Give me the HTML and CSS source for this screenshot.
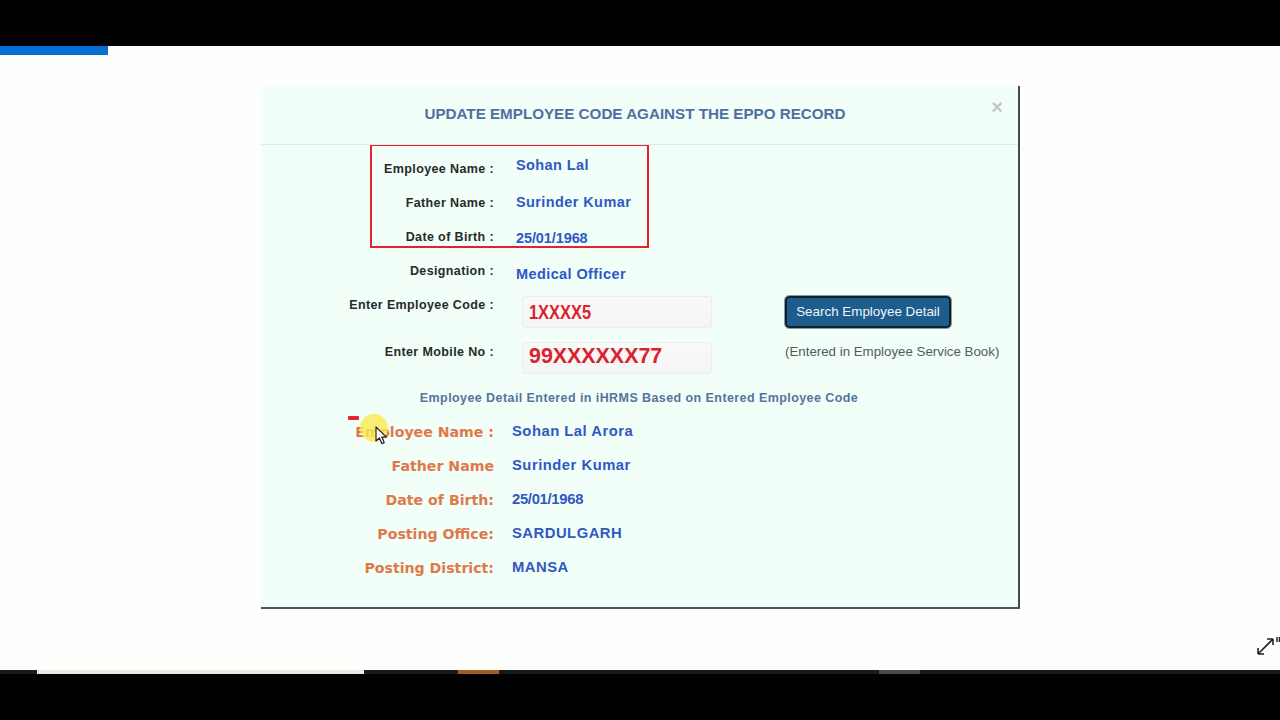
FILE: index.html
```html
<!DOCTYPE html>
<html lang="en">
<head>
<meta charset="utf-8">
<title>Update Employee Code</title>
<link rel="stylesheet" href="styles.css">
</head>
<body>
<div class="topbar"></div>
<main class="stage">
  <div class="loader"></div>
  <section class="modal">
    <header class="modal-head">
      <h1 class="title">UPDATE EMPLOYEE CODE AGAINST THE EPPO RECORD</h1>
      <span class="close">×</span>
    </header>
    <div class="redbox">
      <div class="row"><span class="label label-boxed">Employee Name :</span><span class="value value-up">Sohan Lal</span></div>
      <div class="row"><span class="label label-boxed">Father Name :</span><span class="value">Surinder Kumar</span></div>
      <div class="row"><span class="label label-boxed">Date of Birth :</span><span class="value value-down value-date">25/01/1968</span></div>
    </div>
    <div class="row row-designation"><span class="label label-high">Designation :</span><span class="value value-low">Medical Officer</span></div>
    <div class="form-row form-row-first">
      <span class="label form-label">Enter Employee Code :</span>
      <div class="field field-code"><span class="code-text">1XXXX5</span></div>
      <button class="search">Search Employee Detail</button>
    </div>
    <div class="form-row">
      <span class="label form-label form-label-mobile">Enter Mobile No :</span>
      <div class="field field-mobile">99XXXXXX77</div>
      <span class="note">(Entered in Employee Service Book)</span>
    </div>
    <h2 class="subhead">Employee Detail Entered in iHRMS Based on Entered Employee Code</h2>
    <div class="details">
      <div class="row"><span class="dlabel">Employee Name :</span><span class="dvalue">Sohan Lal Arora</span></div>
      <div class="row"><span class="dlabel">Father Name</span><span class="dvalue">Surinder Kumar</span></div>
      <div class="row"><span class="dlabel">Date of Birth:</span><span class="dvalue dvalue-date">25/01/1968</span></div>
      <div class="row"><span class="dlabel">Posting Office:</span><span class="dvalue">SARDULGARH</span></div>
      <div class="row"><span class="dlabel">Posting District:</span><span class="dvalue">MANSA</span></div>
    </div>
    <i class="dash"></i>
    <i class="halo"></i>
    <svg class="cursor" viewBox="0 0 13 19" width="13" height="19"><path d="M1 1v14l3.400-3 2.400 5.600 2.400-1-2.400-5.500h4.600z" fill="#fff" stroke="#222" stroke-width="1.200" stroke-linejoin="round"/></svg>
  </section>
  <svg class="expand" viewBox="0 0 24 20" width="24" height="20"><path d="M2 18 17 3M2 18v-6M2 18h6M17 3h-6M17 3v6" fill="none" stroke="#222" stroke-width="1.600"/><path d="M21 1v5M23.500 1v5" stroke="#222" stroke-width="1.500"/></svg>
</main>
<footer class="bottombar">
  <div class="track">
    <i class="seg seg-gap1"></i>
    <i class="seg seg-white"></i>
    <i class="seg seg-gap2"></i>
    <i class="seg seg-orange"></i>
    <i class="seg seg-gap3"></i>
    <i class="seg seg-gray"></i>
  </div>
</footer>
</body>
</html>
```
FILE: styles.css
```css
* { box-sizing: border-box; }
html, body { height: 100%; }
body {
  margin: 0;
  display: flex;
  flex-direction: column;
  height: 720px;
  overflow: hidden;
  background: #000;
  font-family: "Liberation Sans", Arial, sans-serif;
}
.topbar { height: 46px; background: #000; flex: none; }
.stage {
  position: relative;
  height: 624px;
  flex: none;
  background: #fdfffd;
}
.loader { width: 108px; height: 9px; background: #0370d2; }
.modal {
  position: relative;
  width: 759px;
  height: 523px;
  margin: 31px 0 0 261px;
  background: #f2fef8;
  border-right: 2px solid #4a4a4a;
  border-bottom: 2px solid #555;
}
.modal-head {
  position: relative;
  height: 59px;
  padding-right: 9px;
  display: flex;
  align-items: center;
  justify-content: center;
  border-bottom: 1px solid #e2ece7;
}
.title {
  margin: 0 0 3px;
  font-size: 15.200px;
  font-weight: 700;
  color: #4f6fa3;
}
.close {
  position: absolute;
  right: 15px;
  top: 10px;
  font-size: 20px;
  line-height: 22px;
  font-weight: 700;
  color: #c2c9c6;
}
.redbox {
  width: 279px;
  height: 104px;
  margin: -1px 0 0 109px;
  padding-top: 5px;
  border: 2px solid #e2232f;
}
.row { display: flex; align-items: center; height: 34px; }
.label {
  width: 233px;
  flex: none;
  margin-top: 2px;
  text-align: right;
  font-size: 12.500px;
  font-weight: 700;
  letter-spacing: 0.38px;
  color: #262b2a;
}
.label-boxed { width: 122px; }
.label-high { margin-top: 0; }
.value {
  margin-left: 22px;
  font-size: 14.500px;
  font-weight: 700;
  letter-spacing: 0.4px;
  color: #2f58c4;
}
.value-up { margin-bottom: 6px; }
.value-down { margin-top: 4px; }
.value-low { margin-top: 6px; }
.value-date { letter-spacing: -0.1px; }
.row-designation { margin-top: 6px; }
.form-row { display: flex; align-items: flex-start; margin-bottom: 14px; }
.form-row-first { margin-top: 8px; }
.form-label { margin-top: 0; line-height: 18px; }
.form-label-mobile { margin-top: 1px; }
.field {
  width: 190px;
  height: 32px;
  margin-left: 28px;
  padding-left: 6px;
  border: 1px solid #e9eeeb;
  border-radius: 3px;
  background: linear-gradient(#f9f9f8, #f4f5f4);
  color: #d9232e;
  font-weight: 700;
}
.field-code { font-size: 20px; line-height: 31px; }
.code-text { display: inline-block; transform: scaleX(.82); transform-origin: left center; }
.field-mobile { font-size: 21.400px; line-height: 26px; }
.search {
  width: 166px;
  height: 32px;
  margin-left: 73px;
  padding: 0 0 2px;
  border: 2px solid #10212f;
  border-radius: 4px;
  outline: 1px solid #8a99a5;
  outline-offset: 0;
  background: #1c5d8e;
  color: #eef5f9;
  font: 400 13.400px "Liberation Sans", Arial, sans-serif;
}
.note {
  margin-left: 73px;
  font-size: 13.300px;
  line-height: 20px;
  color: #555b5a;
}
.subhead {
  width: 756px;
  margin: 15px 0 0;
  text-align: center;
  font-size: 12.500px;
  line-height: 18px;
  font-weight: 700;
  letter-spacing: 0.42px;
  color: #56749f;
}
.details { margin-top: 7px; }
.dlabel {
  width: 233px;
  flex: none;
  margin-top: 1px;
  text-align: right;
  font: 700 14.150px "DejaVu Sans", sans-serif;
  color: #e0794a;
}
.dvalue {
  margin-left: 18px;
  font-size: 14.800px;
  font-weight: 700;
  letter-spacing: 0.5px;
  color: #2f58c4;
}
.dvalue-date { letter-spacing: -0.3px; }
.dash {
  position: absolute;
  left: 87px;
  top: 330px;
  width: 11px;
  height: 4px;
  border-radius: 1px;
  background: #e8202f;
}
.halo {
  position: absolute;
  left: 99px;
  top: 328px;
  width: 28px;
  height: 28px;
  border-radius: 50%;
  background: rgba(250, 232, 80, .8);
}
.cursor { position: absolute; left: 114px; top: 340px; }
.expand { position: absolute; right: 0; top: 590px; }
.bottombar { height: 50px; flex: none; background: #000; }
.track { display: flex; height: 4px; background: #1a1a1a; }
.seg { display: block; height: 4px; flex: none; }
.seg-gap1 { width: 37px; }
.seg-white { width: 327px; background: #e9e9e6; }
.seg-gap2 { width: 94px; }
.seg-orange { width: 41px; background: #a85c20; }
.seg-gap3 { width: 380px; }
.seg-gray { width: 41px; background: #4a4a4a; }
```
